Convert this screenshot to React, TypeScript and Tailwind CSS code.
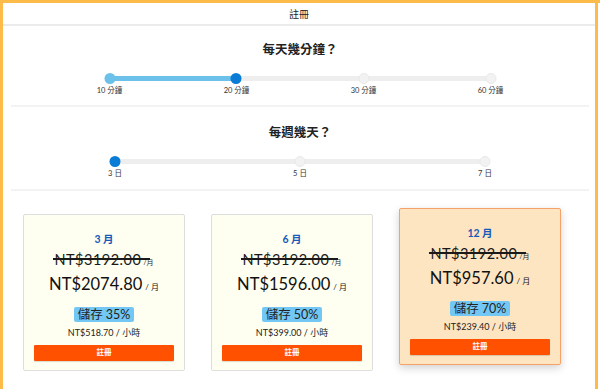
import React from 'react'

const FONT = { fontFamily: 'Lato, "Noto Sans CJK TC", "Noto Sans", sans-serif' }

type Stop = { label: string; left: string }

const MINUTES: Stop[] = [
  { label: '10 分鐘', left: 'left-[0%]' },
  { label: '20 分鐘', left: 'left-[33.333%]' },
  { label: '30 分鐘', left: 'left-[66.667%]' },
  { label: '60 分鐘', left: 'left-[100%]' },
]

const DAYS: Stop[] = [
  { label: '3 日', left: 'left-[0%]' },
  { label: '5 日', left: 'left-[50%]' },
  { label: '7 日', left: 'left-[100%]' },
]

const PLANS = [
  { months: '3 月', price: 'NT$2074.80', save: '35%', hourly: 'NT$518.70 / 小時', hot: false },
  { months: '6 月', price: 'NT$1596.00', save: '50%', hourly: 'NT$399.00 / 小時', hot: false },
  { months: '12 月', price: 'NT$957.60', save: '70%', hourly: 'NT$239.40 / 小時', hot: true },
]

function Slider({
  stops,
  width,
  fill,
  active,
}: {
  stops: Stop[]
  width: string
  fill: string
  active: number
}) {
  return (
    <div className={`relative mx-auto ${width}`}>
      <div className="relative h-[11px]">
        <div className="absolute left-0 right-0 top-[3px] h-[5px] rounded-full bg-[#eeeeee]" />
        <div className={`absolute left-0 top-[3px] h-[5px] rounded-full bg-[#6cc1ea] ${fill}`} />
        {stops.map((s, i) => (
          <div
            key={s.label}
            className={`absolute top-0 h-[11px] w-[11px] -translate-x-1/2 rounded-full ${s.left} ${
              i === active
                ? 'bg-[#0a7cd6]'
                : i < active
                  ? 'bg-[#6cc1ea]'
                  : 'bg-[#f2f2f2] border border-[#e9e9e9]'
            }`}
          />
        ))}
      </div>
      <div className="relative mt-[1px] h-[12px]">
        {stops.map((s) => (
          <span
            key={s.label}
            className={`absolute top-0 -translate-x-1/2 whitespace-nowrap text-[7.5px] leading-[12px] text-[#333] ${s.left}`}
          >
            {s.label}
          </span>
        ))}
      </div>
    </div>
  )
}

function PlanCard({ plan }: { plan: (typeof PLANS)[number] }) {
  return (
    <div
      className={`w-[162px] rounded-[2px] border px-[10px] pb-[9px] pt-[17px] text-center ${
        plan.hot
          ? 'mt-[17px] border-[#f5a268] bg-[#fee5c2] shadow-[0_3px_8px_rgba(0,0,0,0.18)]'
          : 'mt-[23px] border-[#dedede] bg-[#fffff1]'
      }`}
    >
      <div className="h-[14px] text-[10.5px] font-bold leading-[14px] text-[#1659b8]">{plan.months}</div>
      <div className="mt-[4px] flex h-[18px] items-baseline justify-center leading-[18px] text-[#1a1a1a]">
        <span className="relative inline-block">
          <span className="text-[14.5px] tracking-[0.5px]">NT$3192.00</span>
          <span className="ml-[2px] text-[7px]">/月</span>
          {/* strike line runs through the price and the unit */}
          <span className="absolute left-[-1px] right-[4px] top-[8px] h-[1.5px] bg-[#1a1a1a]" />
        </span>
      </div>
      <div className="mt-[4px] flex h-[24px] items-baseline justify-center leading-[24px] text-[#111]">
        <span className="text-[16.5px]">{plan.price}</span>
        <span className="ml-[3px] text-[8px]">/ 月</span>
      </div>
      <div className="mt-[11px] flex h-[15px] justify-center">
        <span className="h-[15px] rounded-[2px] bg-[#72c7f4] px-[4px] text-[12.5px] leading-[15px] text-[#222]">
          儲存 {plan.save}
        </span>
      </div>
      <div className="mt-[5px] h-[12px] text-[9px] leading-[12px] text-[#222]">{plan.hourly}</div>
      <button className="mt-[6px] block h-[16px] w-full rounded-[1px] bg-[#ff5100] text-[7.5px] font-bold leading-[16px] text-white shadow-[0_1px_1px_rgba(0,0,0,0.15)]">
        註冊
      </button>
    </div>
  )
}

export default function App() {
  return (
    <div className="h-[389px] w-[600px] overflow-hidden border-t-[3px] border-[#fdbb4a] bg-white" style={FONT}>
      <div className="mr-[2px] h-full border-l-[3px] border-r-[3px] border-[#fdbb4a]">
        {/* Header */}
        <div className="h-[23px] border-b-2 border-[#ebebeb] text-center text-[10px] leading-[22px] text-[#222]">
          註冊
        </div>

        {/* Minutes per day */}
        <div className="ml-[8px] mr-[6px] h-[81px] border-b-2 border-[#f3f3f3] pt-[14px]">
          <div className="text-center text-[12.5px] font-semibold leading-[20px] text-[#222]">每天幾分鐘？</div>
          <div className="mt-[13px]">
            <Slider stops={MINUTES} width="w-[381px]" fill="w-[33.333%]" active={1} />
          </div>
        </div>

        {/* Days per week */}
        <div className="ml-[8px] mr-[6px] h-[84px] border-b-2 border-[#f3f3f3] pt-[16px]">
          <div className="text-center text-[12.5px] font-semibold leading-[20px] text-[#222]">每週幾天？</div>
          <div className="mt-[13px]">
            <Slider stops={DAYS} width="w-[370px]" fill="w-0" active={0} />
          </div>
        </div>

        {/* Plans */}
        <div className="flex items-start gap-[26px] pl-[20px]">
          {PLANS.map((p) => (
            <PlanCard key={p.months} plan={p} />
          ))}
        </div>
      </div>
    </div>
  )
}
